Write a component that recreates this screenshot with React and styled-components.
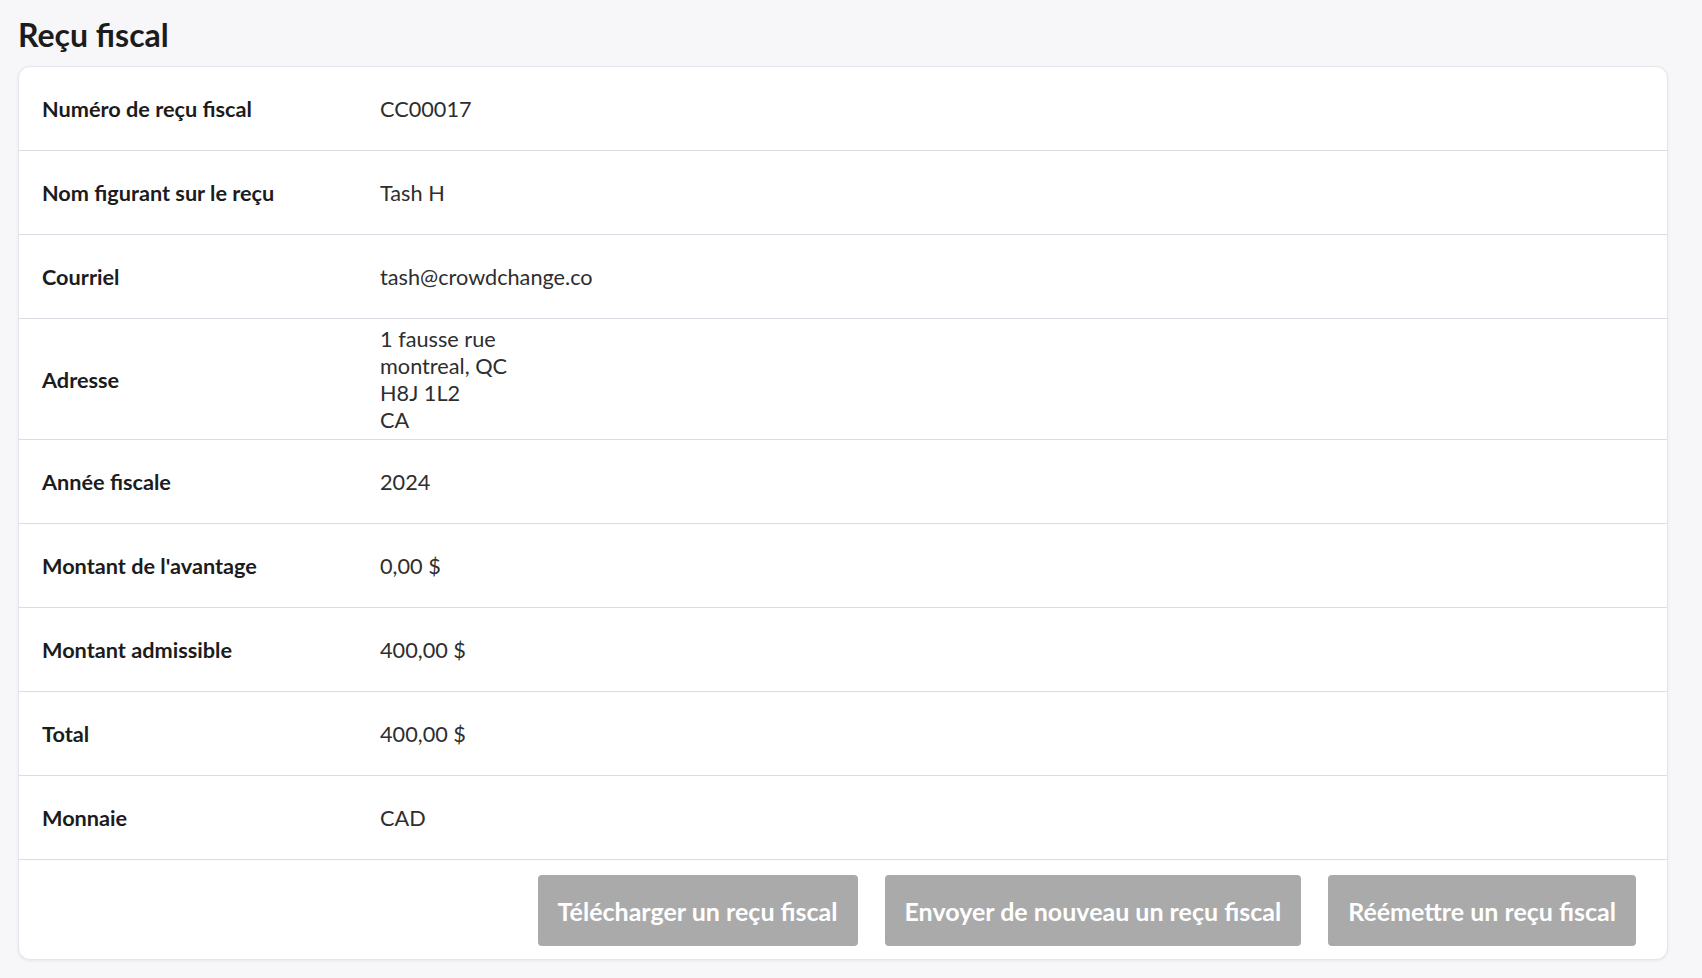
import React from 'react'
import styled, { createGlobalStyle } from 'styled-components'

const GlobalStyle = createGlobalStyle`
    html, body {
        margin: 0;
        padding: 0;
        background: #f7f7f9;
        font-family: Lato, "Liberation Sans", sans-serif;
        color: #1c1c1c;
    }
    * {
        box-sizing: border-box;
    }
`

const rows = [
    { label: 'Numéro de reçu fiscal', value: ['CC00017'] },
    { label: 'Nom figurant sur le reçu', value: ['Tash H'] },
    { label: 'Courriel', value: ['tash@crowdchange.co'] },
    { label: 'Adresse', value: ['1 fausse rue', 'montreal, QC', 'H8J 1L2', 'CA'] },
    { label: 'Année fiscale', value: ['2024'] },
    { label: "Montant de l'avantage", value: ['0,00 $'] },
    { label: 'Montant admissible', value: ['400,00 $'] },
    { label: 'Total', value: ['400,00 $'] },
    { label: 'Monnaie', value: ['CAD'] },
]

const actions = [
    'Télécharger un reçu fiscal',
    'Envoyer de nouveau un reçu fiscal',
    'Réémettre un reçu fiscal',
]

const App = () => {
    return (
        <>
            <GlobalStyle />
            <Page>
                <Title>Reçu fiscal</Title>
                <Card>
                    {rows.map(row => (
                        <Row key={row.label}>
                            <Label>{row.label}</Label>
                            <Value>
                                {row.value.map(line => <div key={line}>{line}</div>)}
                            </Value>
                        </Row>
                    ))}
                    <Footer>
                        {actions.map(a => <ActionButton key={a}>{a}</ActionButton>)}
                    </Footer>
                </Card>
            </Page>
        </>
    )
}

export default App

const Page = styled.main`
    padding: 16px 34px 20px 18px;
`

const Title = styled.h1`
    margin: 0 0 12px 0;
    font-size: 32px;
    line-height: 38px;
    font-weight: 700;
    color: #1c1c1c;
`

const Card = styled.section`
    background: #fff;
    border: 1px solid #e4e6eb;
    border-radius: 12px;
    box-shadow: 0 1px 3px rgba(30, 40, 60, 0.08);
    overflow: hidden;
`

const Row = styled.div`
    display: grid;
    grid-template-columns: 338px 1fr;
    align-items: center;
    min-height: 84px;
    padding: 7px 23px 5px;
    border-bottom: 1px solid #d9dde3;
    font-size: 21.7px;
    line-height: 27px;
`

const Label = styled.div`
    font-weight: 700;
    color: #1c1c1c;
`

const Value = styled.div`
    color: #2e2e2e;
`

const Footer = styled.div`
    display: flex;
    justify-content: flex-end;
    gap: 27px;
    padding: 15px 31px 13px;
`

const ActionButton = styled.button`
    height: 71px;
    padding: 0 20px;
    border: none;
    border-radius: 4px;
    background: #aaaaaa;
    color: #fff;
    font-family: Lato, "Liberation Sans", sans-serif;
    font-size: 25px;
    font-weight: 700;
    cursor: pointer;
`
